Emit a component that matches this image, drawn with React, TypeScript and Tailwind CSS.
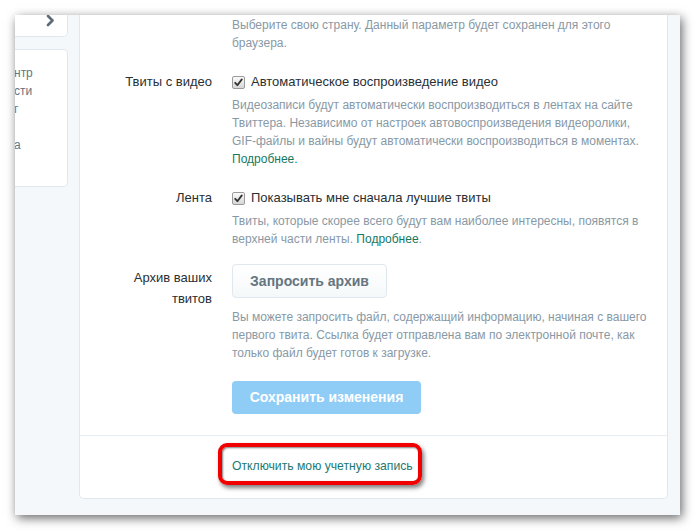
import React from "react";

function Check() {
  return (
    <span className="flex h-[13px] w-[13px] shrink-0 items-center justify-center rounded-[2px] border border-[#9a9a9a] bg-[linear-gradient(#fbfbfb,#d6d6d6)]">
      <svg width="9" height="9" viewBox="0 0 9 9">
        <path d="M1.2 4.8 L3.4 7.2 L7.8 1.4" fill="none" stroke="#333" strokeWidth="1.8" strokeLinecap="round" strokeLinejoin="round" />
      </svg>
    </span>
  );
}

export default function App() {
  const desc = "text-[12px] leading-[18px] text-[#8899a6] whitespace-nowrap";
  const label = "w-[132px] shrink-0 text-right text-[13px] leading-[20px] text-[#292f33]";
  const link = "text-[#17785f]";
  return (
    <div className="h-[531px] w-[695px] overflow-hidden bg-white pl-[15px] pt-[15px] font-['Liberation_Sans',Arial,sans-serif]">
      <div className="flex h-[500px] w-[665px] overflow-hidden bg-[#f5f8fa] shadow-[2px_3px_10px_rgba(0,0,0,0.6)]">
        {/* left column */}
        <div className="-mt-[20px] flex w-[53px] shrink-0 flex-col gap-[12px]">
          <div className="flex h-[42px] items-end justify-end rounded-r-[5px] border border-l-0 border-[#e1e8ed] bg-white pb-[9px] pr-[12px]">
            <svg width="9" height="13" viewBox="0 0 9 13">
              <path d="M2 2 L6.5 6.5 L2 11" fill="none" stroke="#5b6b78" strokeWidth="2.6" strokeLinecap="round" strokeLinejoin="round" />
            </svg>
          </div>
          <div className="h-[138px] rounded-r-[5px] border border-l-0 border-[#e1e8ed] bg-white pt-[14px] text-[12px] leading-[18px] text-[#66757f]">
            <div className="-ml-[1px]">нтр</div>
            <div className="-ml-[1px]">сти</div>
            <div className="-ml-[1px]">г</div>
            <div>&nbsp;</div>
            <div className="-ml-[1px]">а</div>
          </div>
        </div>

        {/* main card */}
        <div className="ml-[11px] flex h-[484px] w-[589px] shrink-0 flex-col rounded-b-[5px] border border-t-0 border-[#e1e8ed] bg-white">
          <div className="pb-[21px] pt-[1px]">
            <div className="flex">
              <div className={label}></div>
              <div className={"ml-[20px] " + desc}>
                Выберите свою страну. Данный параметр будет сохранен для этого
                <br />
                браузера.
              </div>
            </div>

            <div className="mt-[20px] flex">
              <div className={label}>Твиты с видео</div>
              <div className="ml-[20px]">
                <div className="flex h-[20px] items-center gap-[6px] text-[13px] text-[#292f33]">
                  <Check />
                  <span>Автоматическое воспроизведение видео</span>
                </div>
                <div className={"mt-[4px] " + desc}>
                  Видеозаписи будут автоматически воспроизводиться в лентах на сайте
                  <br />
                  Твиттера. Независимо от настроек автовоспроизведения видеоролики,
                  <br />
                  GIF-файлы и вайны будут автоматически воспроизводиться в моментах.
                  <br />
                  <span className={link}>Подробнее.</span>
                </div>
              </div>
            </div>

            <div className="mt-[20px] flex">
              <div className={label}>Лента</div>
              <div className="ml-[20px]">
                <div className="flex h-[20px] items-center gap-[6px] text-[13px] text-[#292f33]">
                  <Check />
                  <span>Показывать мне сначала лучшие твиты</span>
                </div>
                <div className={"mt-[4px] " + desc}>
                  Твиты, которые скорее всего будут вам наиболее интересны, появятся в
                  <br />
                  верхней части ленты. <span className={link}>Подробнее</span>.
                </div>
              </div>
            </div>

            <div className="mt-[16px] flex">
              <div className={label + " pt-[3px] leading-[21px]"}>
                Архив ваших
                <br />
                твитов
              </div>
              <div className="ml-[20px]">
                <div className="flex h-[34px] w-[155px] items-center justify-center rounded-[4px] border border-[#e1e8ed] bg-[linear-gradient(#ffffff,#f5f8fa)] text-[14px] font-bold text-[#66757f]">
                  Запросить архив
                </div>
                <div className={"mt-[10px] " + desc}>
                  Вы можете запросить файл, содержащий информацию, начиная с вашего
                  <br />
                  первого твита. Ссылка будет отправлена вам по электронной почте, как
                  <br />
                  только файл будет готов к загрузке.
                </div>
              </div>
            </div>

            <div className="mt-[19px] flex">
              <div className={label}></div>
              <div className="ml-[20px] flex h-[33px] w-[189px] items-center justify-center rounded-[4px] bg-[#8fcdf6] text-[14px] font-bold text-white">
                Сохранить изменения
              </div>
            </div>
          </div>

          <div className="relative flex-1 border-t border-[#e6ecf0]">
            <div className="flex pt-[21px]">
              <div className="w-[132px] shrink-0"></div>
              <div className="ml-[20px] text-[12.2px] leading-[18px] text-[#1c7a72]">
                Отключить мою учетную запись
              </div>
            </div>
            <div className="absolute left-[138px] top-[7px] h-[42px] w-[204px] rounded-[9px] border-[4px] border-[#f20000] shadow-[2px_3px_4px_rgba(0,0,0,0.5),inset_1px_1px_2px_rgba(0,0,0,0.5)]"></div>
          </div>
        </div>
      </div>
    </div>
  );
}
